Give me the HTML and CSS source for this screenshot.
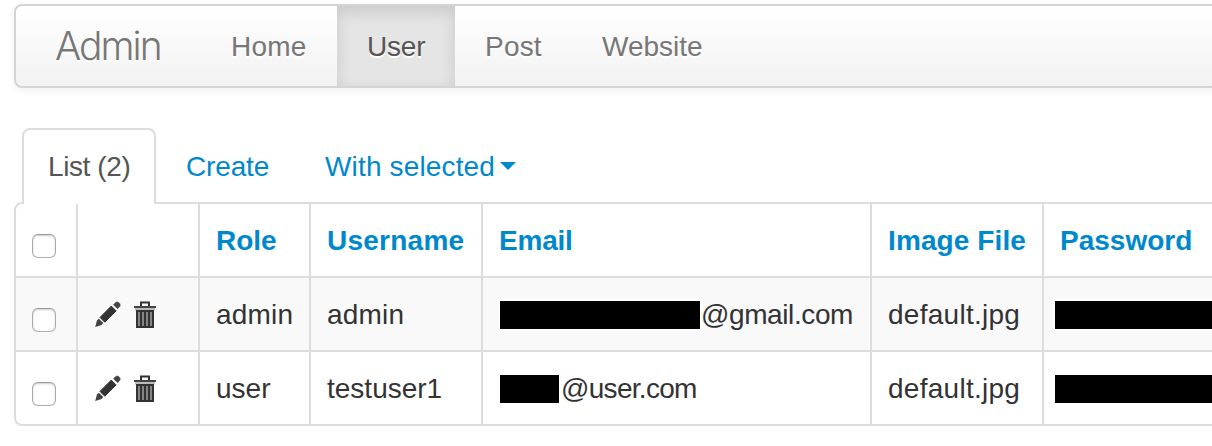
FILE: index.html
```html
<!DOCTYPE html>
<html lang="en">
<head>
<meta charset="utf-8">
<title>User - Admin</title>
<link rel="stylesheet" href="styles.css">
</head>
<body>
<svg class="defs" width="0" height="0">
  <symbol id="pencil" viewBox="0 0 28 28">
    <path d="M1.200 27l1.800-6.800 1.900-1.500 4.300 4.300-1.500 2z" fill="#444"/>
    <path d="M6 17.400L17.300 6.100l4.800 4.800L10.800 22.200z" fill="#333" stroke="#333" stroke-width="1" stroke-linejoin="round"/>
    <path d="M19.500 4.700l2.200-2.200q1.600-1.200 3.200.2l.7.7q1.300 1.700.1 3.100l-2.200 2.200z" fill="#444" stroke="#444" stroke-width=".6" stroke-linejoin="round"/>
  </symbol>
  <symbol id="trash" viewBox="0 0 24 28">
    <path d="M2 8h20v2.500H2z" fill="#bbb"/>
    <path d="M8 6V2.500h8V6" fill="none" stroke="#333" stroke-width="2"/>
    <path d="M1 6h22v2H1z" fill="#444"/>
    <path d="M3 10h18v18H3z" fill="#333"/>
    <path d="M6 12v14M10 12v14M14 12v14M18 12v14" stroke="#858585" stroke-width="2"/>
  </symbol>
</svg>
<nav class="navbar">
  <a class="brand">Admin</a>
  <a class="nav-link home">Home</a>
  <a class="nav-link active">User</a>
  <a class="nav-link post">Post</a>
  <a class="nav-link website">Website</a>
</nav>
<div class="tabs">
  <a class="tab current"><span class="t-list">List (2)</span></a>
  <a class="tab"><span class="t-create">Create</span></a>
  <a class="tab"><span class="t-with">With selected</span><i class="caret"></i></a>
</div>
<main class="grid">
  <div class="row head">
    <div class="cell check"><span class="box"></span></div>
    <div class="cell"></div>
    <div class="cell"><span class="h-role">Role</span></div>
    <div class="cell"><span class="h-username">Username</span></div>
    <div class="cell"><span class="h-email">Email</span></div>
    <div class="cell"><span class="h-image">Image File</span></div>
    <div class="cell"><span class="h-password">Password</span></div>
  </div>
  <div class="row striped">
    <div class="cell check"><span class="box"></span></div>
    <div class="cell actions"><svg class="pencil"><use href="#pencil"/></svg><svg class="trash"><use href="#trash"/></svg></div>
    <div class="cell"><span class="v-admin">admin</span></div>
    <div class="cell"><span class="v-admin">admin</span></div>
    <div class="cell"><i class="redact long"></i><span class="v-gmail">@gmail.com</span></div>
    <div class="cell"><span class="v-file">default.jpg</span></div>
    <div class="cell"><i class="redact fill"></i></div>
  </div>
  <div class="row">
    <div class="cell check"><span class="box"></span></div>
    <div class="cell actions"><svg class="pencil"><use href="#pencil"/></svg><svg class="trash"><use href="#trash"/></svg></div>
    <div class="cell"><span class="v-user">user</span></div>
    <div class="cell"><span class="v-test">testuser1</span></div>
    <div class="cell"><i class="redact short"></i><span class="v-mail">@user.com</span></div>
    <div class="cell"><span class="v-file">default.jpg</span></div>
    <div class="cell"><i class="redact fill"></i></div>
  </div>
</main>
</body>
</html>
```
FILE: styles.css
```css
* { box-sizing: border-box; }
body {
  margin: 0;
  height: 446px;
  padding: 4px 0 0 14px;
  overflow: hidden;
  background: #fff;
  color: #333;
  font: 28px/40px "Liberation Sans", Arial, sans-serif;
  white-space: nowrap;
}
.defs { display: none; }

.navbar {
  display: flex;
  height: 84px;
  margin-right: -20px;
  border: 2px solid #d4d4d4;
  border-radius: 8px;
  background: linear-gradient(#fff, #f2f2f2);
  box-shadow: 0 2px 8px rgba(0, 0, 0, .067);
}
.brand, .nav-link { color: #777; text-shadow: 0 2px 0 #fff; padding-top: 21px; }
.brand {
  width: 185px;
  padding: 20px 0 0 39px;
  font: 300 39px/40px Inter, sans-serif;
  letter-spacing: -2px;
}
.nav-link { padding-left: 30px; }
.home { width: 136px; letter-spacing: .2px; }
.active {
  width: 118px;
  background: #e5e5e5;
  box-shadow: inset 0 6px 16px rgba(0, 0, 0, .125);
  color: #555;
  letter-spacing: -.2px;
}
.post { width: 117px; letter-spacing: .2px; }

.tabs {
  display: flex;
  height: 76px;
  margin: 40px 0 -2px 8px;
}
.tab {
  display: flex;
  height: 76px;
  padding: 19px 0 0 30px;
  color: #08c;
}
.tab + .tab { width: 139px; }
.tab.current {
  position: relative;
  width: 134px;
  padding: 17px 0 0 24px;
  border: 2px solid #ddd;
  border-bottom: 0;
  border-radius: 8px 8px 0 0;
  background: #fff;
  color: #555;
}
.t-list { letter-spacing: -.4px; }
.t-create { letter-spacing: -.15px; }
.t-with { letter-spacing: .15px; }
.caret {
  margin: 15px 0 0 5px;
  height: 8px;
  border: 8px solid transparent;
  border-top-color: #08c;
  border-bottom: 0;
}

.grid {
  width: 1230px;
  border: 2px solid #ddd;
  border-radius: 8px;
}
.row {
  display: grid;
  grid-template-columns: 60px 122px 111px 172px 389px 172px 1fr;
  height: 74px;
  border-top: 2px solid #ddd;
}
.row.head { height: 72px; border-top: 0; color: #08c; font-weight: 700; }
.striped { background: #f9f9f9; }
.cell { display: flex; padding: 17px 0 0 16px; border-left: 2px solid #ddd; }
.cell.check { border-left: 0; }
.h-username { letter-spacing: .25px; }
.h-email { letter-spacing: -.2px; }
.h-image { letter-spacing: .1px; }
.v-admin { letter-spacing: .2px; }
.v-gmail { margin-left: 1px; letter-spacing: -.4px; }
.v-mail { letter-spacing: -.7px; }
.v-file { letter-spacing: .27px; }
.box {
  width: 24px;
  height: 24px;
  margin-top: 13px;
  border: 1px solid #aaa;
  border-color: #999 #aaa #b0b0b0;
  border-radius: 6px;
  background: #fff;
  box-shadow: inset 0 1px 2px rgba(0, 0, 0, .2);
}
.pencil { width: 28px; height: 28px; margin-top: 5px; }
.trash { width: 24px; height: 28px; margin: 5px 0 0 11px; }
.redact { height: 28px; margin-top: 6px; background: #000; box-shadow: 0 0 0 2px #fff; }
.long { width: 200px; margin-left: 1px; }
.short { width: 59px; margin: 6px 2px 0 1px; }
.fill { width: 180px; margin-left: -5px; }
```
